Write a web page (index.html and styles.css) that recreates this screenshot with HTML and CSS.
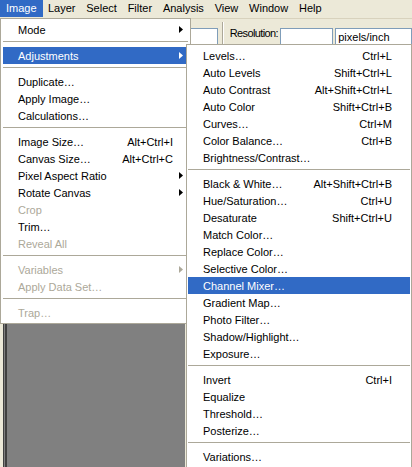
FILE: index.html
```html
<!DOCTYPE html>
<html lang="en">
  <head>
    <meta charset="UTF-8" />
    <title>Image menu</title>
    <link rel="stylesheet" href="styles.css">
  </head>
  <body>
    <div class="menubar">
      <span class="menubar-item active">Image</span>
      <span class="menubar-item">Layer</span>
      <span class="menubar-item">Select</span>
      <span class="menubar-item">Filter</span>
      <span class="menubar-item">Analysis</span>
      <span class="menubar-item">View</span>
      <span class="menubar-item">Window</span>
      <span class="menubar-item">Help</span>
    </div>

    <div class="optionsbar">
      <span class="textbox size-box"></span>
      <span class="optionsbar-sep"></span>
      <span class="optionsbar-label">Resolution:</span>
      <span class="textbox res-box"></span>
      <span class="textbox unit-box">pixels/inch</span>
    </div>

    <div class="workspace">
      <div class="canvas"></div>
    </div>

    <ul class="menu image-menu">
      <li class="menu-item">Mode<svg class="arrow" width="4" height="7"><path d="M0 0L4 3.5L0 7z" /></svg></li>
      <li class="menu-sep"></li>
      <li class="menu-item selected">Adjustments<svg class="arrow" width="4" height="7"><path d="M0 0L4 3.5L0 7z" /></svg></li>
      <li class="menu-sep"></li>
      <li class="menu-item">Duplicate…</li>
      <li class="menu-item">Apply Image…</li>
      <li class="menu-item">Calculations…</li>
      <li class="menu-sep"></li>
      <li class="menu-item"><span>Image Size…</span><span>Alt+Ctrl+I</span></li>
      <li class="menu-item"><span>Canvas Size…</span><span>Alt+Ctrl+C</span></li>
      <li class="menu-item">Pixel Aspect Ratio<svg class="arrow" width="4" height="7"><path d="M0 0L4 3.5L0 7z" /></svg></li>
      <li class="menu-item">Rotate Canvas<svg class="arrow" width="4" height="7"><path d="M0 0L4 3.5L0 7z" /></svg></li>
      <li class="menu-item disabled">Crop</li>
      <li class="menu-item">Trim…</li>
      <li class="menu-item disabled">Reveal All</li>
      <li class="menu-sep"></li>
      <li class="menu-item disabled">Variables<svg class="arrow" width="4" height="7"><path d="M0 0L4 3.5L0 7z" /></svg></li>
      <li class="menu-item disabled">Apply Data Set…</li>
      <li class="menu-sep"></li>
      <li class="menu-item disabled">Trap…</li>
    </ul>

    <ul class="menu adjust-menu">
      <li class="menu-item"><span>Levels…</span><span>Ctrl+L</span></li>
      <li class="menu-item"><span>Auto Levels</span><span>Shift+Ctrl+L</span></li>
      <li class="menu-item"><span>Auto Contrast</span><span>Alt+Shift+Ctrl+L</span></li>
      <li class="menu-item"><span>Auto Color</span><span>Shift+Ctrl+B</span></li>
      <li class="menu-item"><span>Curves…</span><span>Ctrl+M</span></li>
      <li class="menu-item"><span>Color Balance…</span><span>Ctrl+B</span></li>
      <li class="menu-item">Brightness/Contrast…</li>
      <li class="menu-sep"></li>
      <li class="menu-item"><span>Black &amp; White…</span><span>Alt+Shift+Ctrl+B</span></li>
      <li class="menu-item"><span>Hue/Saturation…</span><span>Ctrl+U</span></li>
      <li class="menu-item"><span>Desaturate</span><span>Shift+Ctrl+U</span></li>
      <li class="menu-item">Match Color…</li>
      <li class="menu-item">Replace Color…</li>
      <li class="menu-item">Selective Color…</li>
      <li class="menu-item selected">Channel Mixer…</li>
      <li class="menu-item">Gradient Map…</li>
      <li class="menu-item">Photo Filter…</li>
      <li class="menu-item">Shadow/Highlight…</li>
      <li class="menu-item">Exposure…</li>
      <li class="menu-sep"></li>
      <li class="menu-item"><span>Invert</span><span>Ctrl+I</span></li>
      <li class="menu-item">Equalize</li>
      <li class="menu-item">Threshold…</li>
      <li class="menu-item">Posterize…</li>
      <li class="menu-sep"></li>
      <li class="menu-item">Variations…</li>
    </ul>
  </body>
</html>
```

FILE: styles.css
```css
* {
  margin: 0;
  padding: 0;
  box-sizing: border-box;
}
body {
  width: 412px;
  height: 467px;
  overflow: hidden;
  position: relative;
  display: flex;
  flex-direction: column;
  background: #ece9d8;
  font-family: "Liberation Sans", Arial, sans-serif;
  font-size: 11px;
  color: #000;
}

/* menu bar */
.menubar {
  display: flex;
  height: 18px;
  background: #ece9d8;
}
.menubar-item {
  height: 17px;
  line-height: 17px;
  padding: 0 5.4px;
}
.menubar-item.active {
  padding: 0 6px;
  background: #316ac5;
  color: #fff;
}

/* options bar */
.optionsbar {
  display: flex;
  align-items: flex-start;
  height: 26px;
  padding-top: 9px;
  border-top: 1px solid #d8d2bd;
  background: #ece9d8;
}
.textbox {
  height: 17px;
  border: 1px solid #7f9db9;
  background: #fff;
  line-height: 17px;
  padding-left: 2px;
}
.size-box {
  margin-left: 160px;
  width: 60px;
}
.optionsbar-sep {
  align-self: stretch;
  width: 2px;
  margin: -6px 0 0 4px;
  border-left: 1px solid #aca899;
  border-right: 1px solid #fff;
}
.optionsbar-label {
  width: 53px;
  margin-left: 6px;
  line-height: 11px;
  letter-spacing: -0.6px;
}
.res-box {
  width: 55px;
}
.unit-box {
  width: 80px;
  margin-left: 2px;
}

/* document area */
.workspace {
  flex: 1;
  padding-left: 3px;
}
.canvas {
  height: 100%;
  width: 182px;
  background: linear-gradient(to right, #404040 0 1px, #808080 1px 2px, #404040 2px 4px, #808080 4px);
}

/* drop-down menus */
.menu {
  position: absolute;
  list-style: none;
  background: #fff;
  border: 1px solid #aca899;
  padding: 2px;
}
.image-menu {
  left: 0;
  top: 18px;
  width: 191px;
}
.adjust-menu {
  left: 186px;
  top: 44px;
  width: 226px;
  padding: 2px 1px;
}
.menu-item {
  position: relative;
  display: flex;
  justify-content: space-between;
  height: 17px;
  line-height: 18px;
  padding: 0 15px;
  white-space: nowrap;
}
.adjust-menu .menu-item {
  padding-right: 18px;
}
.menu-item.selected {
  background: #316ac5;
  color: #fff;
}
.menu-item.disabled {
  color: #aca899;
}
.arrow {
  position: absolute;
  right: 5px;
  top: 5px;
  fill: currentColor;
}
.menu-sep {
  height: 1px;
  margin: 3px 0 5px;
  background: #aca899;
}
```
